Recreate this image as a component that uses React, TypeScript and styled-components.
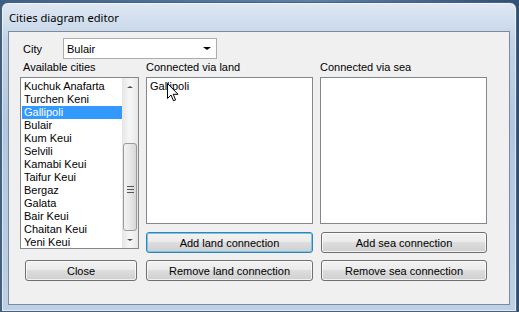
import React from 'react';
import styled, { createGlobalStyle } from 'styled-components';

const GlobalStyle = createGlobalStyle`
  html, body {
    margin: 0;
    padding: 0;
  }
  body {
    width: 519px;
    height: 312px;
    overflow: hidden;
    font-family: "Liberation Sans", Arial, sans-serif;
  }
`;

const Desktop = styled.div`
  width: 519px;
  height: 312px;
  box-sizing: border-box;
  padding: 2px 2px 0 1px;
  background: linear-gradient(90deg, #3c5f86 0%, #5a82ad 60%, #2f4f74 100%);
`;

const Window = styled.div`
  position: relative;
  width: 516px;
  height: 310px;
  box-sizing: border-box;
  padding: 0 6px 6px 6px;
  border: 1px solid #4e6078;
  border-radius: 7px 7px 0 0;
  background: linear-gradient(180deg, #dfe8f3 0%, #c3d4e8 12%, #b1c7e1 40%, #bcd0e7 100%);
  display: flex;
  flex-direction: column;
  box-shadow: inset 0 0 0 1px rgba(255, 255, 255, 0.55);
`;

const TitleBar = styled.div`
  height: 28px;
  display: flex;
  align-items: center;
  padding-left: 1px;
  font-family: "Noto Sans", "Open Sans", sans-serif;
  font-size: 11.2px;
  color: #000;
`;

const Client = styled.div`
  flex: 1;
  box-sizing: border-box;
  border: 1px solid #7e8a99;
  background: #f0f0f0;
  padding: 6px 0 0 11px;
  display: flex;
  flex-direction: column;
  font-size: 11px;
  color: #000;
`;

const CityRow = styled.div`
  display: flex;
  align-items: center;
  height: 21px;
`;

const CityLabel = styled.span`
  width: 40px;
  padding-left: 3px;
`;

const Combo = styled.div`
  width: 154px;
  height: 21px;
  box-sizing: border-box;
  border: 1px solid #abadb3;
  background: #fff;
  display: flex;
  align-items: center;
  justify-content: space-between;
  padding: 0 5px 0 3px;
`;

const Arrow = styled.span<{ $dir?: 'up' | 'down'; $size?: number; $color?: string }>`
  width: 0;
  height: 0;
  border-left: ${(p) => p.$size ?? 4}px solid transparent;
  border-right: ${(p) => p.$size ?? 4}px solid transparent;
  ${(p) =>
    p.$dir === 'up'
      ? `border-bottom: ${(p.$size ?? 4) - 1}px solid ${p.$color ?? '#000'};`
      : `border-top: ${(p.$size ?? 4) - 1}px solid ${p.$color ?? '#000'};`}
`;

const Grid = styled.div`
  margin-top: 2px;
  display: grid;
  grid-template-columns: 119px 167px 167px;
  grid-template-rows: 16px 155px 28px 21px;
  column-gap: 7px;
  align-items: start;
`;

const ColLabel = styled.div<{ $indent?: number }>`
  height: 16px;
  line-height: 13px;
  padding-left: ${(p) => p.$indent ?? 0}px;
`;

const ListBox = styled.div<{ $tall?: boolean }>`
  position: relative;
  box-sizing: border-box;
  height: ${(p) => (p.$tall ? 172 : 147)}px;
  border: 1px solid #828790;
  background: #fff;
  grid-row: ${(p) => (p.$tall ? '2 / span 2' : 'auto')};
  display: flex;
  overflow: hidden;
`;

const Items = styled.div`
  flex: 1;
  padding-top: 2px;
`;

const Item = styled.div<{ $selected?: boolean }>`
  height: 13px;
  line-height: 13px;
  padding-left: 2px;
  margin-left: 1px;
  white-space: nowrap;
  background: ${(p) => (p.$selected ? '#3399ff' : 'transparent')};
  color: ${(p) => (p.$selected ? '#fff' : '#000')};
`;

const ScrollBar = styled.div`
  width: 16px;
  background: linear-gradient(90deg, #e6e6e6, #f4f4f4 40%, #f4f4f4 60%, #e6e6e6);
  display: flex;
  flex-direction: column;
  align-items: center;
`;

const ScrollBtn = styled.div`
  height: 17px;
  width: 16px;
  display: flex;
  align-items: center;
  justify-content: center;
`;

const ScrollTrack = styled.div`
  flex: 1;
  width: 16px;
  display: flex;
  flex-direction: column;
  align-items: center;
  padding-top: 48px;
  box-sizing: border-box;
`;

const Thumb = styled.div`
  width: 14px;
  height: 88px;
  box-sizing: border-box;
  border: 1px solid #9a9a9a;
  border-radius: 3px;
  background: linear-gradient(90deg, #f3f3f3 0%, #e8e8e8 50%, #d6d6d6 100%);
  display: flex;
  flex-direction: column;
  align-items: center;
  justify-content: center;
  gap: 2px;
  padding-top: 4px;

  span {
    display: block;
    width: 7px;
    height: 1px;
    background: #555;
  }
`;

const Button = styled.button<{ $default?: boolean; $width?: number; $indent?: number }>`
  width: ${(p) => p.$width ?? 167}px;
  height: 21px;
  margin-left: ${(p) => p.$indent ?? 0}px;
  box-sizing: border-box;
  padding: 0;
  font-family: "Liberation Sans", Arial, sans-serif;
  font-size: 11px;
  color: #000;
  border-radius: 3px;
  border: 1px solid ${(p) => (p.$default ? '#3c7fb1' : '#707070')};
  background: linear-gradient(180deg, #f2f2f2 0%, #ebebeb 45%, #dddddd 50%, #cfcfcf 100%);
  box-shadow: inset 0 0 0 1px ${(p) => (p.$default ? '#6fc8f0' : 'rgba(255,255,255,0.7)')};
`;

const Cursor = styled.svg`
  position: absolute;
  left: 20px;
  top: 5px;
`;

const cities = [
  'Kuchuk Anafarta',
  'Turchen Keni',
  'Gallipoli',
  'Bulair',
  'Kum Keui',
  'Selvili',
  'Kamabi Keui',
  'Taifur Keui',
  'Bergaz',
  'Galata',
  'Bair Keui',
  'Chaitan Keui',
  'Yeni Keui',
];

const App = () => (
  <>
    <GlobalStyle />
    <Desktop>
      <Window>
        <TitleBar>Cities diagram editor</TitleBar>
        <Client>
          <CityRow>
            <CityLabel>City</CityLabel>
            <Combo>
              <span>Bulair</span>
              <Arrow $size={4} />
            </Combo>
          </CityRow>
          <Grid>
            <ColLabel $indent={3}>Available cities</ColLabel>
            <ColLabel>Connected via land</ColLabel>
            <ColLabel>Connected via sea</ColLabel>

            <ListBox $tall>
              <Items>
                {cities.map((c) => (
                  <Item key={c} $selected={c === 'Gallipoli'}>
                    {c}
                  </Item>
                ))}
              </Items>
              <ScrollBar>
                <ScrollBtn>
                  <Arrow $dir="up" $size={3} $color="#4d4d4d" />
                </ScrollBtn>
                <ScrollTrack>
                  <Thumb>
                    <span />
                    <span />
                    <span />
                  </Thumb>
                </ScrollTrack>
                <ScrollBtn>
                  <Arrow $dir="down" $size={3} $color="#4d4d4d" />
                </ScrollBtn>
              </ScrollBar>
            </ListBox>
            <ListBox>
              <Items>
                <Item>Gallipoli</Item>
              </Items>
              <Cursor width="12" height="19" viewBox="0 0 12 19">
                <path
                  d="M0.5 0.5 L0.5 15.5 L4 12 L6.5 17.8 L8.6 16.9 L6.2 11.3 L11 11.3 Z"
                  fill="#fff"
                  stroke="#000"
                  strokeWidth="1"
                  strokeLinejoin="miter"
                />
              </Cursor>
            </ListBox>
            <ListBox />

            <Button $default>Add land connection</Button>
            <Button $width={166} $indent={1}>Add sea connection</Button>

            <Button $width={112} $indent={5}>Close</Button>
            <Button>Remove land connection</Button>
            <Button $width={166} $indent={1}>Remove sea connection</Button>
          </Grid>
        </Client>
      </Window>
    </Desktop>
  </>
);

export default App;
